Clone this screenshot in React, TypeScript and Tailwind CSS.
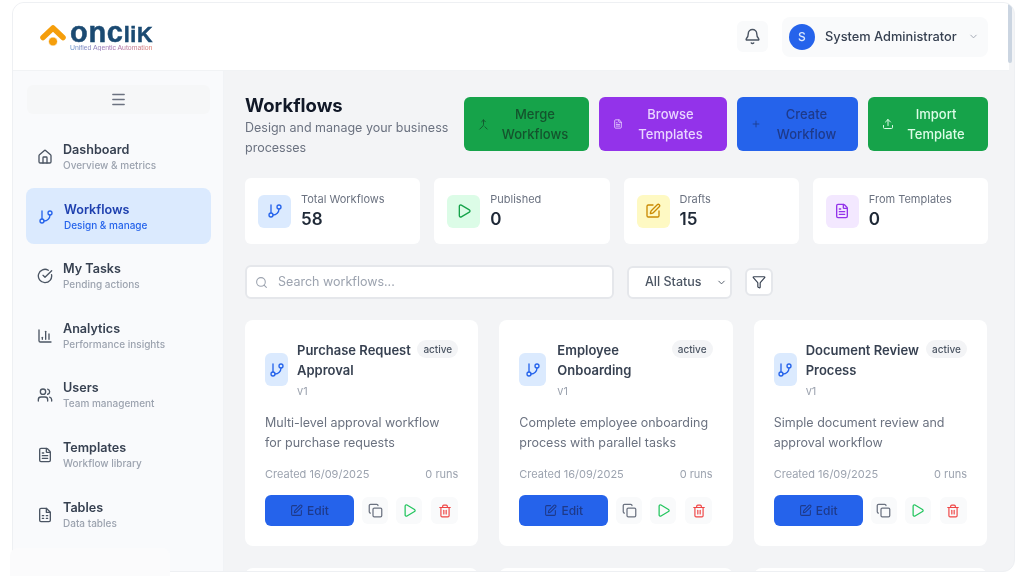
import {
  Bell,
  ChartColumn,
  ChevronDown,
  CircleCheckBig,
  Copy,
  FileText,
  Funnel,
  GitBranch,
  House,
  Menu,
  Merge,
  Play,
  Plus,
  Search,
  SquarePen,
  Trash2,
  Upload,
  Users,
  type LucideIcon,
} from "lucide-react";

type NavItem = {
  label: string;
  hint: string;
  icon: LucideIcon | typeof TableFile;
  active?: boolean;
};

function TableFile({ size = 16, className }: { size?: number; className?: string }) {
  return (
    <svg
      width={size}
      height={size}
      viewBox="0 0 24 24"
      fill="none"
      stroke="currentColor"
      strokeWidth={2}
      strokeLinecap="round"
      strokeLinejoin="round"
      className={className}
    >
      <path d="M6 2h8l6 6v12a2 2 0 0 1-2 2H6a2 2 0 0 1-2-2V4a2 2 0 0 1 2-2z" />
      <path d="M14 2v6h6" />
      <path d="M8 13h2M14 13h2M8 17h2M14 17h2" />
    </svg>
  );
}

const navItems: NavItem[] = [
  { label: "Dashboard", hint: "Overview & metrics", icon: House },
  { label: "Workflows", hint: "Design & manage", icon: GitBranch, active: true },
  { label: "My Tasks", hint: "Pending actions", icon: CircleCheckBig },
  { label: "Analytics", hint: "Performance insights", icon: ChartColumn },
  { label: "Users", hint: "Team management", icon: Users },
  { label: "Templates", hint: "Workflow library", icon: FileText },
  { label: "Tables", hint: "Data tables", icon: TableFile },
];

const actions = [
  { top: "Merge", bottom: "Workflows", icon: Merge, box: "w-[125px] bg-[#16a34a] pr-[8px] text-[#14532d]", size: 11 },
  { top: "Browse", bottom: "Templates", icon: FileText, box: "w-[128px] bg-[#9333ea] pr-[9px] text-[#e9d5ff]", size: 10 },
  { top: "Create", bottom: "Workflow", icon: Plus, box: "w-[121px] bg-[#2563eb] pr-[6px] text-[#1e3a8a]", size: 10 },
  { top: "Import", bottom: "Template", icon: Upload, box: "w-[120px] bg-[#16a34a] pr-[10px] text-[#dcfce7]", size: 12 },
];

const stats = [
  { label: "Total Workflows", value: "58", icon: GitBranch, box: "bg-[#dbeafe] text-[#2563eb]" },
  { label: "Published", value: "0", icon: Play, box: "bg-[#dcfce7] text-[#16a34a]" },
  { label: "Drafts", value: "15", icon: SquarePen, box: "bg-[#fef9c3] text-[#ca8a04]" },
  { label: "From Templates", value: "0", icon: FileText, box: "bg-[#f3e8ff] text-[#9333ea]" },
];

const workflows = [
  {
    name: "Purchase Request Approval",
    description: "Multi-level approval workflow for purchase requests",
    iconBox: "mr-[9px] w-[23px]",
  },
  {
    name: "Employee Onboarding",
    description: "Complete employee onboarding process with parallel tasks",
    iconBox: "mr-[11px] w-[27px]",
  },
  {
    name: "Document Review Process",
    description: "Simple document review and approval workflow",
    iconBox: "mr-[9px] w-[23px]",
  },
];

function Logo() {
  return (
    <div className="flex items-start gap-[4px]">
      <svg width="26" height="23" viewBox="0 0 26 23" fill="none" className="mt-[1px]">
        <path d="M3 13.5 13 4l10 9.5" stroke="#f59e0b" strokeWidth="5.5" strokeLinecap="round" strokeLinejoin="round" />
        <circle cx="13" cy="17.5" r="4.5" fill="#f59e0b" stroke="#ffffff" strokeWidth="0.8" />
      </svg>
      <div className="flex flex-col">
        <span className="h-[18px] font-['Liberation_Sans'] font-bold leading-[18px] tracking-[0.7px] text-[#1b4a72] [-webkit-text-stroke:0.5px_#1b4a72]">
          <span className="text-[29px]">onc</span>
          <span className="text-[21.5px]">liK</span>
        </span>
        <span className="mt-[3px] bg-gradient-to-r from-[#5b8fc9] via-[#a06cb0] to-[#e07a6a] bg-clip-text font-['Liberation_Sans'] text-[6.9px] leading-[7px] text-transparent">
          Unified Agentic Automation
        </span>
      </div>
    </div>
  );
}

function Sidebar() {
  return (
    <aside className="flex w-[211px] shrink-0 flex-col border-r border-[#f1f3f6] bg-[#f9fafc] pl-[14px] pr-[13px] pt-[14px]">
      <div className="flex h-[29px] items-center justify-center rounded-md bg-[#f6f7f8] text-[#6b7280]">
        <Menu size={17} />
      </div>
      <nav className="mt-[15.5px] flex flex-col gap-[4.6px]">
        {navItems.map((item) => {
          const Icon = item.icon;
          return (
            <div
              key={item.label}
              className={
                item.active
                  ? "-mx-[1px] -mt-[1px] flex h-[56px] items-center gap-[10px] rounded-lg bg-[#dbeafe] pl-[12px] pt-[2px] text-[#2563eb]"
                  : "flex h-[55px] items-center gap-[10px] pl-[10px] text-[#4b5563]"
              }
            >
              <Icon size={16} className="shrink-0" />
              <div>
                <div className={item.active ? "text-[12.6px] font-semibold leading-[17px] text-[#1e40af]" : "text-[12.6px] font-semibold leading-[17px] text-[#374151]"}>
                  {item.label}
                </div>
                <div className={item.active ? "text-[10px] font-medium leading-[15px] text-[#2563eb]" : "text-[10px] font-medium leading-[15px] text-[#9ca3af]"}>
                  {item.hint}
                </div>
              </div>
            </div>
          );
        })}
      </nav>
    </aside>
  );
}

function WorkflowCard({ workflow }: { workflow: (typeof workflows)[number] }) {
  return (
    <div className="flex h-[226px] flex-col rounded-lg bg-white px-[20px] pt-[20px]">
      <div className="flex items-start">
        <div className={`mt-[13px] flex h-[33px] shrink-0 items-center justify-center rounded-md bg-[#dbeafe] text-[#2563eb] ${workflow.iconBox}`}>
          <GitBranch size={16} />
        </div>
        <div className="min-w-0 flex-1">
          <div className="text-[13px] font-semibold leading-[20px] text-[#374151]">{workflow.name}</div>
          <div className="mt-[1px] text-[11px] leading-[20px] text-[#9ca3af]">v1</div>
        </div>
        <div className="w-[41px] shrink-0 rounded-full bg-[#f3f4f6] text-center text-[10px] font-medium leading-[18px] text-[#4b5563]">
          active
        </div>
      </div>
      <p className="mt-[12px] text-[12.5px] leading-[20px] text-[#6b7280]">{workflow.description}</p>
      <div className="mt-[13px] flex justify-between text-[11px] leading-[16px] text-[#9ca3af]">
        <span>Created 16/09/2025</span>
        <span>0 runs</span>
      </div>
      <div className="mt-[13px] flex items-center">
        <div className="flex h-[31px] w-[89px] items-center justify-center gap-[4px] rounded-md bg-[#2563eb] text-[12px] font-medium text-[#1e3a8a]">
          <SquarePen size={13} />
          Edit
        </div>
        <div className="ml-[8px] flex h-[27px] w-[26px] items-center justify-center rounded-md bg-[#f9fafb] text-[#6b7280]">
          <Copy size={15} />
        </div>
        <div className="ml-[8px] flex h-[27px] w-[26px] items-center justify-center rounded-md bg-[#f9fafb] text-[#22c55e]">
          <Play size={15} />
        </div>
        <div className="ml-[9px] flex h-[27px] w-[27px] items-center justify-center rounded-md bg-[#f9fafb] text-[#ef4444]">
          <Trash2 size={14} />
        </div>
      </div>
    </div>
  );
}

export default function App() {
  return (
    <div className="relative h-[576px] w-[1024px] overflow-hidden bg-white pl-[12px] pt-[2px] font-['Inter',sans-serif] blur-[0.5px]">
      <div className="relative flex h-[570px] w-[1003px] flex-col overflow-hidden rounded-xl border border-[#eef0f3] bg-[#f3f4f6]">
        <header className="flex h-[68px] w-[996px] shrink-0 items-center border-b border-[#f1f3f5] bg-white pl-[27px] pr-[21px]">
          <Logo />
          <div className="ml-auto flex h-[31px] w-[31px] items-center justify-center rounded-md bg-[#f9fafb] text-[#4b5563]">
            <Bell size={17} />
          </div>
          <div className="ml-[14px] flex h-[40px] w-[206px] items-center rounded-lg bg-[#f9fafb] pl-[7px]">
            <div className="flex h-[26px] w-[26px] items-center justify-center rounded-full bg-[#2563eb] text-[12px] font-medium text-[#dbeafe]">
              S
            </div>
            <span className="ml-[10px] text-[12.8px] font-medium text-[#374151]">System Administrator</span>
            <ChevronDown size={11} className="ml-[11px] text-[#9ca3af]" />
          </div>
        </header>

        <div className="flex min-h-0 flex-1">
          <Sidebar />
          <main className="min-w-0 flex-1 px-[21px] pt-[26px]">
            <div className="flex w-[743px] items-start justify-between">
              <div className="h-[54px] w-[215px]">
                <h1 className="text-[18.5px] font-bold leading-[16px] text-[#111827]">Workflows</h1>
                <p className="mt-[5px] text-[12.5px] leading-[19.5px] text-[#6b7280]">
                  Design and manage your business processes
                </p>
              </div>
              <div className="flex gap-[10px]">
                {actions.map((action) => {
                  const Icon = action.icon;
                  return (
                    <div key={action.top} className={`flex h-[54px] items-center rounded-md pl-[14px] text-[13px] font-medium leading-[20px] ${action.box}`}>
                      <Icon size={action.size} className="shrink-0" />
                      <div className="flex-1 text-center">
                        {action.top}
                        <br />
                        {action.bottom}
                      </div>
                    </div>
                  );
                })}
              </div>
            </div>

            <div className="mt-[27px] grid w-[743px] grid-cols-4 gap-[14px]">
              {stats.map((stat) => {
                const Icon = stat.icon;
                return (
                  <div key={stat.label} className="flex h-[66px] items-center gap-[10px] rounded-md bg-white pl-[13px]">
                    <div className={`flex h-[33px] w-[33px] items-center justify-center rounded-md ${stat.box}`}>
                      <Icon size={16} />
                    </div>
                    <div>
                      <div className="text-[11px] leading-[16px] text-[#6b7280]">{stat.label}</div>
                      <div className="text-[17px] font-semibold leading-[24px] text-[#1f2937]">{stat.value}</div>
                    </div>
                  </div>
                );
              })}
            </div>

            <div className="mt-[21px] flex w-[743px] items-center">
              <div className="flex h-[34px] w-[369px] items-center gap-[10px] rounded-md border-2 border-[#e5e7eb] bg-white pl-[8px] text-[12.5px] text-[#9ca3af]">
                <Search size={13} />
                Search workflows...
              </div>
              <div className="ml-[13px] flex h-[33px] w-[105px] items-center rounded-md border-2 border-[#e5e7eb] bg-white pl-[16px] text-[12.5px] font-medium text-[#4b5563]">
                All Status
                <ChevronDown size={11} className="ml-[14px]" />
              </div>
              <div className="ml-[13px] flex h-[28px] w-[28px] items-center justify-center rounded-md border-2 border-[#e5e7eb] bg-white text-[#374151]">
                <Funnel size={14} />
              </div>
            </div>

            <div className="mt-[21px] grid w-[742px] grid-cols-3 gap-x-[21px] gap-y-[22px]">
              {workflows.map((workflow) => (
                <WorkflowCard key={workflow.name} workflow={workflow} />
              ))}
              <div className="h-[20px] rounded-lg bg-white" />
              <div className="h-[20px] rounded-lg bg-white" />
              <div className="h-[20px] rounded-lg bg-white" />
            </div>
          </main>
        </div>

        <div className="absolute right-[2px] top-0 h-[60px] w-[4px] rounded-full bg-[#cbd5e1]" />
      </div>
      <div className="absolute bottom-0 left-[10px] h-[28px] w-[160px] rounded-t-lg bg-[#fbfbfc]" />
    </div>
  );
}
